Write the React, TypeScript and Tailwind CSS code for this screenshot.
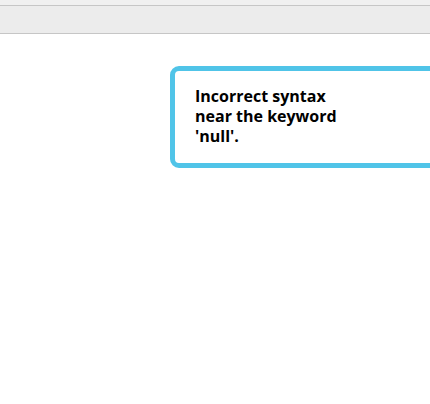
export default function App() {
  return (
    <div className="h-[404px] w-[430px] overflow-hidden bg-white" style={{ fontFamily: "'Open Sans', 'Noto Sans', sans-serif" }}>
      {/* toolbar */}
      <div className="h-[5px] bg-[#f0f0f0]" />
      <div className="h-[29px] border-y border-[#c6c6c6] bg-[#ececec]" />

      <div className="pl-[170px] pt-[32px]">
        <div className="w-[320px] rounded-[9px] border-[5px] border-[#50c4e8] bg-white pl-[20px] pr-4 pt-[15px] pb-[17px]">
          <p className="w-[150px] text-[16px] font-bold leading-[20px] text-black">
            Incorrect syntax near the keyword 'null'.
          </p>
        </div>
      </div>
    </div>
  );
}
